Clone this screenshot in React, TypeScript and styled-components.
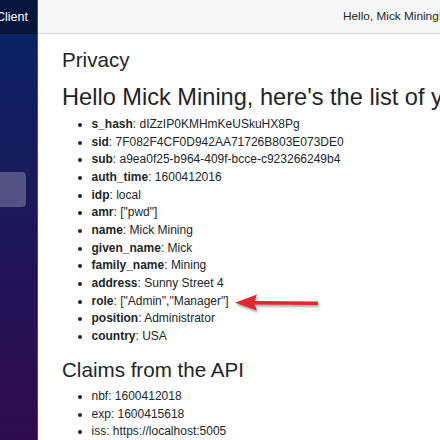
import React from "react";
import styled, { createGlobalStyle } from "styled-components";

const GlobalStyle = createGlobalStyle`
  html, body {
    margin: 0;
    padding: 0;
    overflow: hidden;
  }
  body {
    font-family: "Liberation Sans", Arial, Helvetica, sans-serif;
    font-size: 12px;
    line-height: 1.5;
    color: #212529;
    background: #fff;
  }
`;

const Page = styled.div`
  display: flex;
  height: 100vh;
  position: relative;
`;

const Sidebar = styled.div`
  width: 38px;
  flex-shrink: 0;
  display: flex;
  flex-direction: column;
  background-image: linear-gradient(180deg, rgb(8, 36, 102) 0%, rgb(48, 10, 78) 100%);
  border-right: 1px solid rgba(150, 160, 230, 0.35);
  box-sizing: border-box;
  overflow: hidden;
`;

const Brand = styled.div`
  height: 34px;
  flex-shrink: 0;
  display: flex;
  align-items: center;
  background: rgba(0, 0, 0, 0.4);
`;

const BrandText = styled.span`
  color: #fff;
  font-size: 12.5px;
  margin-left: -4px;
  white-space: nowrap;
`;

const NavList = styled.nav`
  display: flex;
  flex-direction: column;
  gap: 6px;
  padding-top: 15px;
`;

const NavLink = styled.div<{ $active?: boolean }>`
  width: 26px;
  height: 35px;
  border-radius: 0 4px 4px 0;
  background: ${(p) => (p.$active ? "rgba(255, 255, 255, 0.25)" : "transparent")};
`;

const Main = styled.div`
  flex: 1;
  min-width: 0;
  display: flex;
  flex-direction: column;
`;

const TopRow = styled.div`
  height: 34px;
  flex-shrink: 0;
  box-sizing: border-box;
  display: flex;
  align-items: center;
  padding-left: 305px;
  background: #f7f7f7;
  border-bottom: 1px solid #d6d5d5;
  white-space: nowrap;
  overflow: hidden;
`;

const Greeting = styled.span`
  font-size: 11.8px;
  color: #212529;
`;

const Content = styled.div`
  padding: 14px 24px 0;
  white-space: nowrap;
  overflow: hidden;
`;

const H3 = styled.h3<{ $gap?: number }>`
  font-size: 20.6px;
  font-weight: 400;
  line-height: 1.2;
  margin: 0 0 ${(p) => p.$gap ?? 5.9}px;
`;

const H2 = styled.h2`
  font-size: 23.6px;
  font-weight: 400;
  line-height: 1.2;
  margin: 0 0 5px;
`;

const ClaimList = styled.ul`
  margin: 0 0 11.8px;
  padding-left: 29.5px;
  list-style: disc;
`;

const Claim = styled.li`
  line-height: 17.67px;
`;

const Key = styled.b`
  font-weight: 700;
`;

const Arrow = styled.svg`
  position: absolute;
  left: 230px;
  top: 290px;
  width: 95px;
  height: 25px;
  overflow: visible;
  filter: drop-shadow(1.5px 2px 1.2px rgba(0, 0, 0, 0.35));
`;

const userClaims: [string, string][] = [
  ["s_hash", "dIZzIP0KMHmKeUSkuHX8Pg"],
  ["sid", "7F082F4CF0D942AA71726B803E073DE0"],
  ["sub", "a9ea0f25-b964-409f-bcce-c923266249b4"],
  ["auth_time", "1600412016"],
  ["idp", "local"],
  ["amr", '["pwd"]'],
  ["name", "Mick Mining"],
  ["given_name", "Mick"],
  ["family_name", "Mining"],
  ["address", "Sunny Street 4"],
  ["role", '["Admin","Manager"]'],
  ["position", "Administrator"],
  ["country", "USA"],
];

const apiClaims = [
  "nbf: 1600412018",
  "exp: 1600415618",
  "iss: https://localhost:5005",
];

export default function App() {
  return (
    <>
      <GlobalStyle />
      <Page>
        <Sidebar>
          <Brand>
            <BrandText>Client</BrandText>
          </Brand>
          <NavList>
            <NavLink />
            <NavLink />
            <NavLink />
            <NavLink $active />
          </NavList>
        </Sidebar>
        <Main>
          <TopRow>
            <Greeting>Hello, Mick Mining!</Greeting>
          </TopRow>
          <Content>
            <H3 $gap={10}>Privacy</H3>
            <H2>Hello Mick Mining, here's the list of your claims:</H2>
            <ClaimList>
              {userClaims.map(([k, v]) => (
                <Claim key={k}>
                  <Key>{k}</Key>: {v}
                </Claim>
              ))}
            </ClaimList>
            <H3>Claims from the API</H3>
            <ClaimList>
              {apiClaims.map((c) => (
                <Claim key={c}>{c}</Claim>
              ))}
            </ClaimList>
          </Content>
        </Main>
        <Arrow viewBox="0 0 95 25">
          <polygon
            points="5,12.7 27,4.5 24.5,11 88,11.6 88,15 24.5,14.6 27,20.5"
            fill="#e5262b"
          />
        </Arrow>
      </Page>
    </>
  );
}
